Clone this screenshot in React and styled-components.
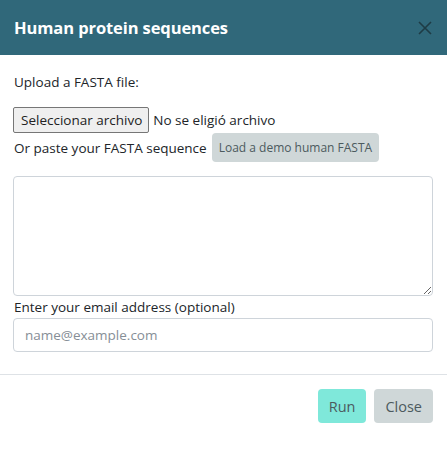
import React from "react";
import styled, { createGlobalStyle } from "styled-components";

const Global = createGlobalStyle`
  html, body {
    margin: 0;
    padding: 0;
    background: #fff;
  }
  body {
    font-family: "Open Sans", "Noto Sans", sans-serif;
    color: #212529;
  }
  * { box-sizing: border-box; }
`;

const Modal = styled.div`
  width: 447px;
  height: 453px;
  background: #fff;
  overflow: hidden;
`;

const Header = styled.div`
  height: 55px;
  background: #30687a;
  display: flex;
  align-items: center;
  justify-content: space-between;
  padding: 0 14px;
`;

const Title = styled.h1`
  margin: 0;
  font-size: 16.5px;
  font-weight: 700;
  color: #fff;
  letter-spacing: -0.1px;
`;

const CloseX = styled.button`
  width: 16px;
  height: 16px;
  border: none;
  padding: 0;
  background: none;
  display: flex;
  cursor: pointer;
`;

const Body = styled.div`
  padding: 17px 14px 0 13px;
`;

const Text = styled.div`
  font-size: 13.5px;
  line-height: 20px;
  padding-left: 1px;
`;

const FileRow = styled.div`
  margin-top: 15px;
  display: flex;
  align-items: center;
  gap: 4px;
  font-size: 13.5px;
`;

const FileButton = styled.button`
  font-family: inherit;
  font-size: 13.5px;
  height: 26px;
  padding: 0 6px 0 7px;
  color: #222;
  background: #efefef;
  border: 1px solid #767676;
  border-radius: 2px;
`;

const PasteRow = styled.div`
  display: flex;
  align-items: center;
  gap: 5px;
  font-size: 13.5px;
  padding-left: 1px;
`;

const GreyButton = styled.button`
  font-family: inherit;
  font-size: ${(p) => (p.small ? "12px" : "14.5px")};
  height: ${(p) => (p.small ? "29px" : "34px")};
  padding: 0 ${(p) => (p.small ? "7px" : "11px")};
  color: #4c5a5e;
  background: ${(p) => (p.run ? "#7fe8da" : "#cfd7d8")};
  border: none;
  border-radius: 4px;
`;

const Area = styled.textarea`
  display: block;
  margin-top: 14px;
  width: 100%;
  height: 120px;
  border: 1px solid #ced4da;
  border-radius: 4px;
  resize: vertical;
  font-family: inherit;
`;

const Label = styled.label`
  display: block;
  margin-top: 1px;
  padding-left: 1px;
  font-size: 13.5px;
  line-height: 20px;
`;

const Input = styled.input`
  display: block;
  margin-top: 1px;
  width: 100%;
  height: 34px;
  border: 1px solid #ced4da;
  border-radius: 4px;
  padding: 0 11px;
  font-family: inherit;
  font-size: 13.5px;
  &::placeholder {
    color: #868e96;
  }
`;

const Footer = styled.div`
  margin-top: 22px;
  border-top: 1px solid #dee2e6;
  padding: 14px 14px 0;
  display: flex;
  justify-content: flex-end;
  gap: 8px;
`;

export default function App() {
  return (
    <>
      <Global />
      <Modal>
        <Header>
          <Title>Human protein sequences</Title>
          <CloseX aria-label="Close">
            <svg width="16" height="16" viewBox="0 0 16 16">
              <path d="M2 2L14 14M14 2L2 14" stroke="#1e3c46" strokeWidth="1.6" />
            </svg>
          </CloseX>
        </Header>
        <Body>
          <Text>Upload a FASTA file:</Text>
          <FileRow>
            <FileButton>Seleccionar archivo</FileButton>
            <span>No se eligió archivo</span>
          </FileRow>
          <PasteRow>
            <span>Or paste your FASTA sequence</span>
            <GreyButton small>Load a demo human FASTA</GreyButton>
          </PasteRow>
          <Area />
          <Label>Enter your email address (optional)</Label>
          <Input placeholder="name@example.com" />
        </Body>
        <Footer>
          <GreyButton run>Run</GreyButton>
          <GreyButton>Close</GreyButton>
        </Footer>
      </Modal>
    </>
  );
}
